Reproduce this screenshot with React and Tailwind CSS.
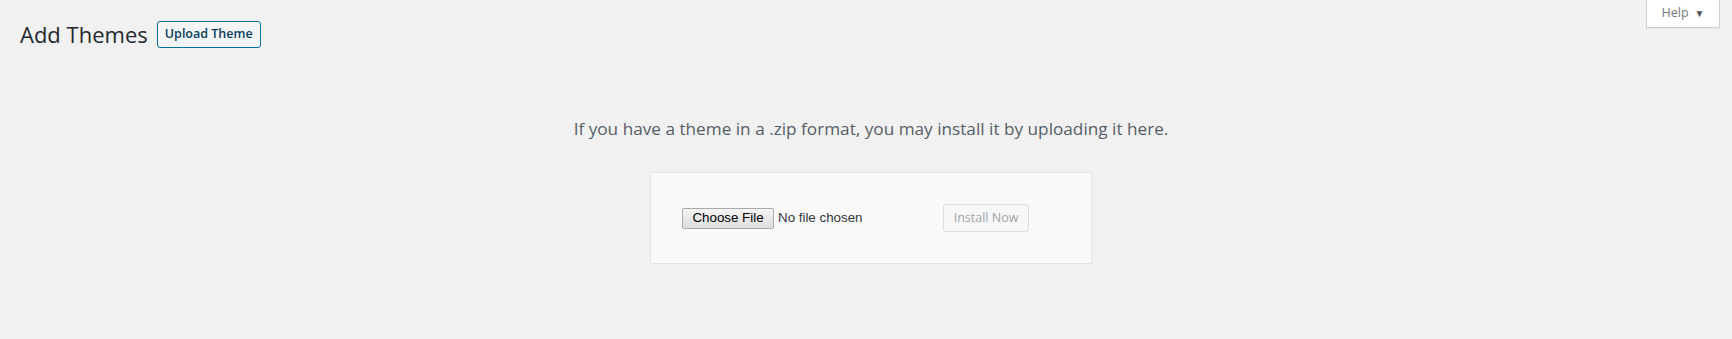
import React from 'react';

const App = () => {
  return (
    <div className="min-h-[339px] bg-[#f1f1f1] font-['Open_Sans',sans-serif] text-[13px] text-[#444]">
      {/* Header */}
      <div className="flex items-start justify-between pl-[20px] pr-[12px]">
        <div className="flex items-center pt-[19px]">
          <h1 className="text-[22px] leading-[30px] font-normal text-[#23282d]">Add Themes</h1>
          <button className="ml-[9px] h-[27px] w-[104px] rounded-[3px] border border-[#0071a1] bg-[#f3f5f6] text-[12.5px] font-semibold text-[#0a3d5c]">
            Upload Theme
          </button>
        </div>
        <button className="flex h-[28px] w-[74px] items-center justify-center gap-[6px] border border-t-0 border-[#ccd0d4] bg-white text-[12.5px] text-[#72777c] shadow-[0_1px_1px_rgba(0,0,0,0.04)]">
          Help
          <span className="text-[10px] text-[#555]">▼</span>
        </button>
      </div>

      {/* Upload area */}
      <div className="flex flex-col items-center pl-[22px] pr-[12px]">
        <p className="mt-[68px] text-[17.2px] leading-[24px] text-[#555d66]">
          If you have a theme in a .zip format, you may install it by uploading it here.
        </p>
        <div className="mt-[31px] flex h-[92px] w-[442px] items-center border border-[#e5e5e5] bg-[#fafafa] pl-[31px]">
          <div className="flex w-[261px] items-center font-['Liberation_Sans',sans-serif] text-[13.33px]">
            <span className="flex h-[21px] w-[92px] items-center justify-center rounded-[2px] border border-[#a9a9a9] bg-gradient-to-b from-[#f4f4f4] to-[#dedede] text-black">
              Choose File
            </span>
            <span className="ml-[4px] text-[#32373c]">No file chosen</span>
          </div>
          <button disabled className="h-[28px] w-[86px] rounded-[3px] border border-[#ddd] bg-[#f7f7f7] text-[12.5px] text-[#a0a5aa]">
            Install Now
          </button>
        </div>
      </div>
    </div>
  );
};

export default App;
